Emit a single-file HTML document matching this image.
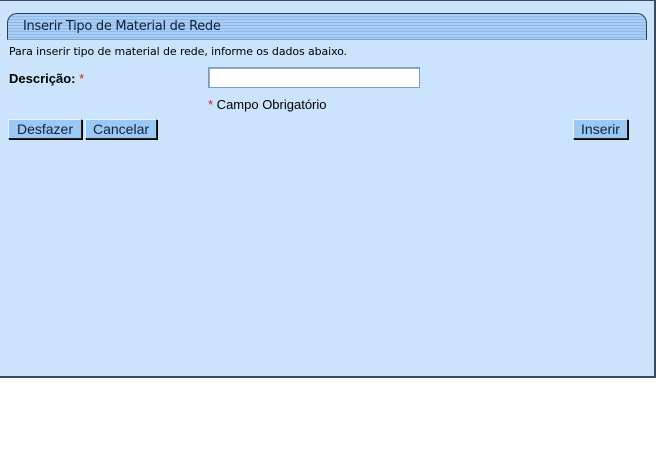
<!DOCTYPE html>
<html><head><meta charset="utf-8"><style>
html,body{margin:0;padding:0;background:#fff;width:658px;height:468px;overflow:hidden}
.panel{position:absolute;left:0;top:0;width:654px;height:375px;background:#cbe3fb;border-right:2px solid #3a4a60;border-bottom:2px solid #3a4a60;border-top:1px solid #3a4a60}
.tab{position:absolute;left:7px;top:13px;width:638px;height:25px;border:1px solid #2c3e58;border-bottom:1px solid #7aa6d8;border-radius:10px 10px 0 0;
background:repeating-linear-gradient(#a9cdf3 0,#a9cdf3 2px,#8fbaea 2px,#8fbaea 3px)}
.tab span{position:absolute;left:15px;top:5px;font:13px "DejaVu Sans",sans-serif;color:#0f1e3a;letter-spacing:-0.3px}
.t{position:absolute;font-family:"Liberation Sans",Arial,sans-serif;color:#000}
.btn{position:absolute;top:119px;height:18px;background:#9cc8f5;border:1px solid #222;border-top-color:#eef;border-left-color:#eef;box-shadow:1px 1px 0 #000;font:14px "Liberation Sans",Arial,sans-serif;color:#10203a;text-align:center;line-height:18px}
.inp{position:absolute;left:208px;top:67px;width:210px;height:19px;background:#fff;border:1px solid #7a9cc8;box-shadow:inset 1px 1px 0 #9ab}
.r{color:#d02020}
</style></head><body>
<div class="panel"></div>
<div class="tab"><span>Inserir Tipo de Material de Rede</span></div>
<div class="t" style="left:9px;top:45px;font:11px 'DejaVu Sans',sans-serif;letter-spacing:-0.1px">Para inserir tipo de material de rede, informe os dados abaixo.</div>
<div class="t" style="left:9px;top:71px;font-size:13px;font-weight:bold">Descrição: <span class="r" style="font-weight:normal">*</span></div>
<div class="inp"></div>
<div class="t" style="left:208px;top:97px;font-size:13px"><span class="r">*</span> Campo Obrigatório</div>
<div class="btn" style="left:8px;width:72px">Desfazer</div>
<div class="btn" style="left:85px;width:70px">Cancelar</div>
<div class="btn" style="left:573px;width:53px">Inserir</div>
</body></html>
